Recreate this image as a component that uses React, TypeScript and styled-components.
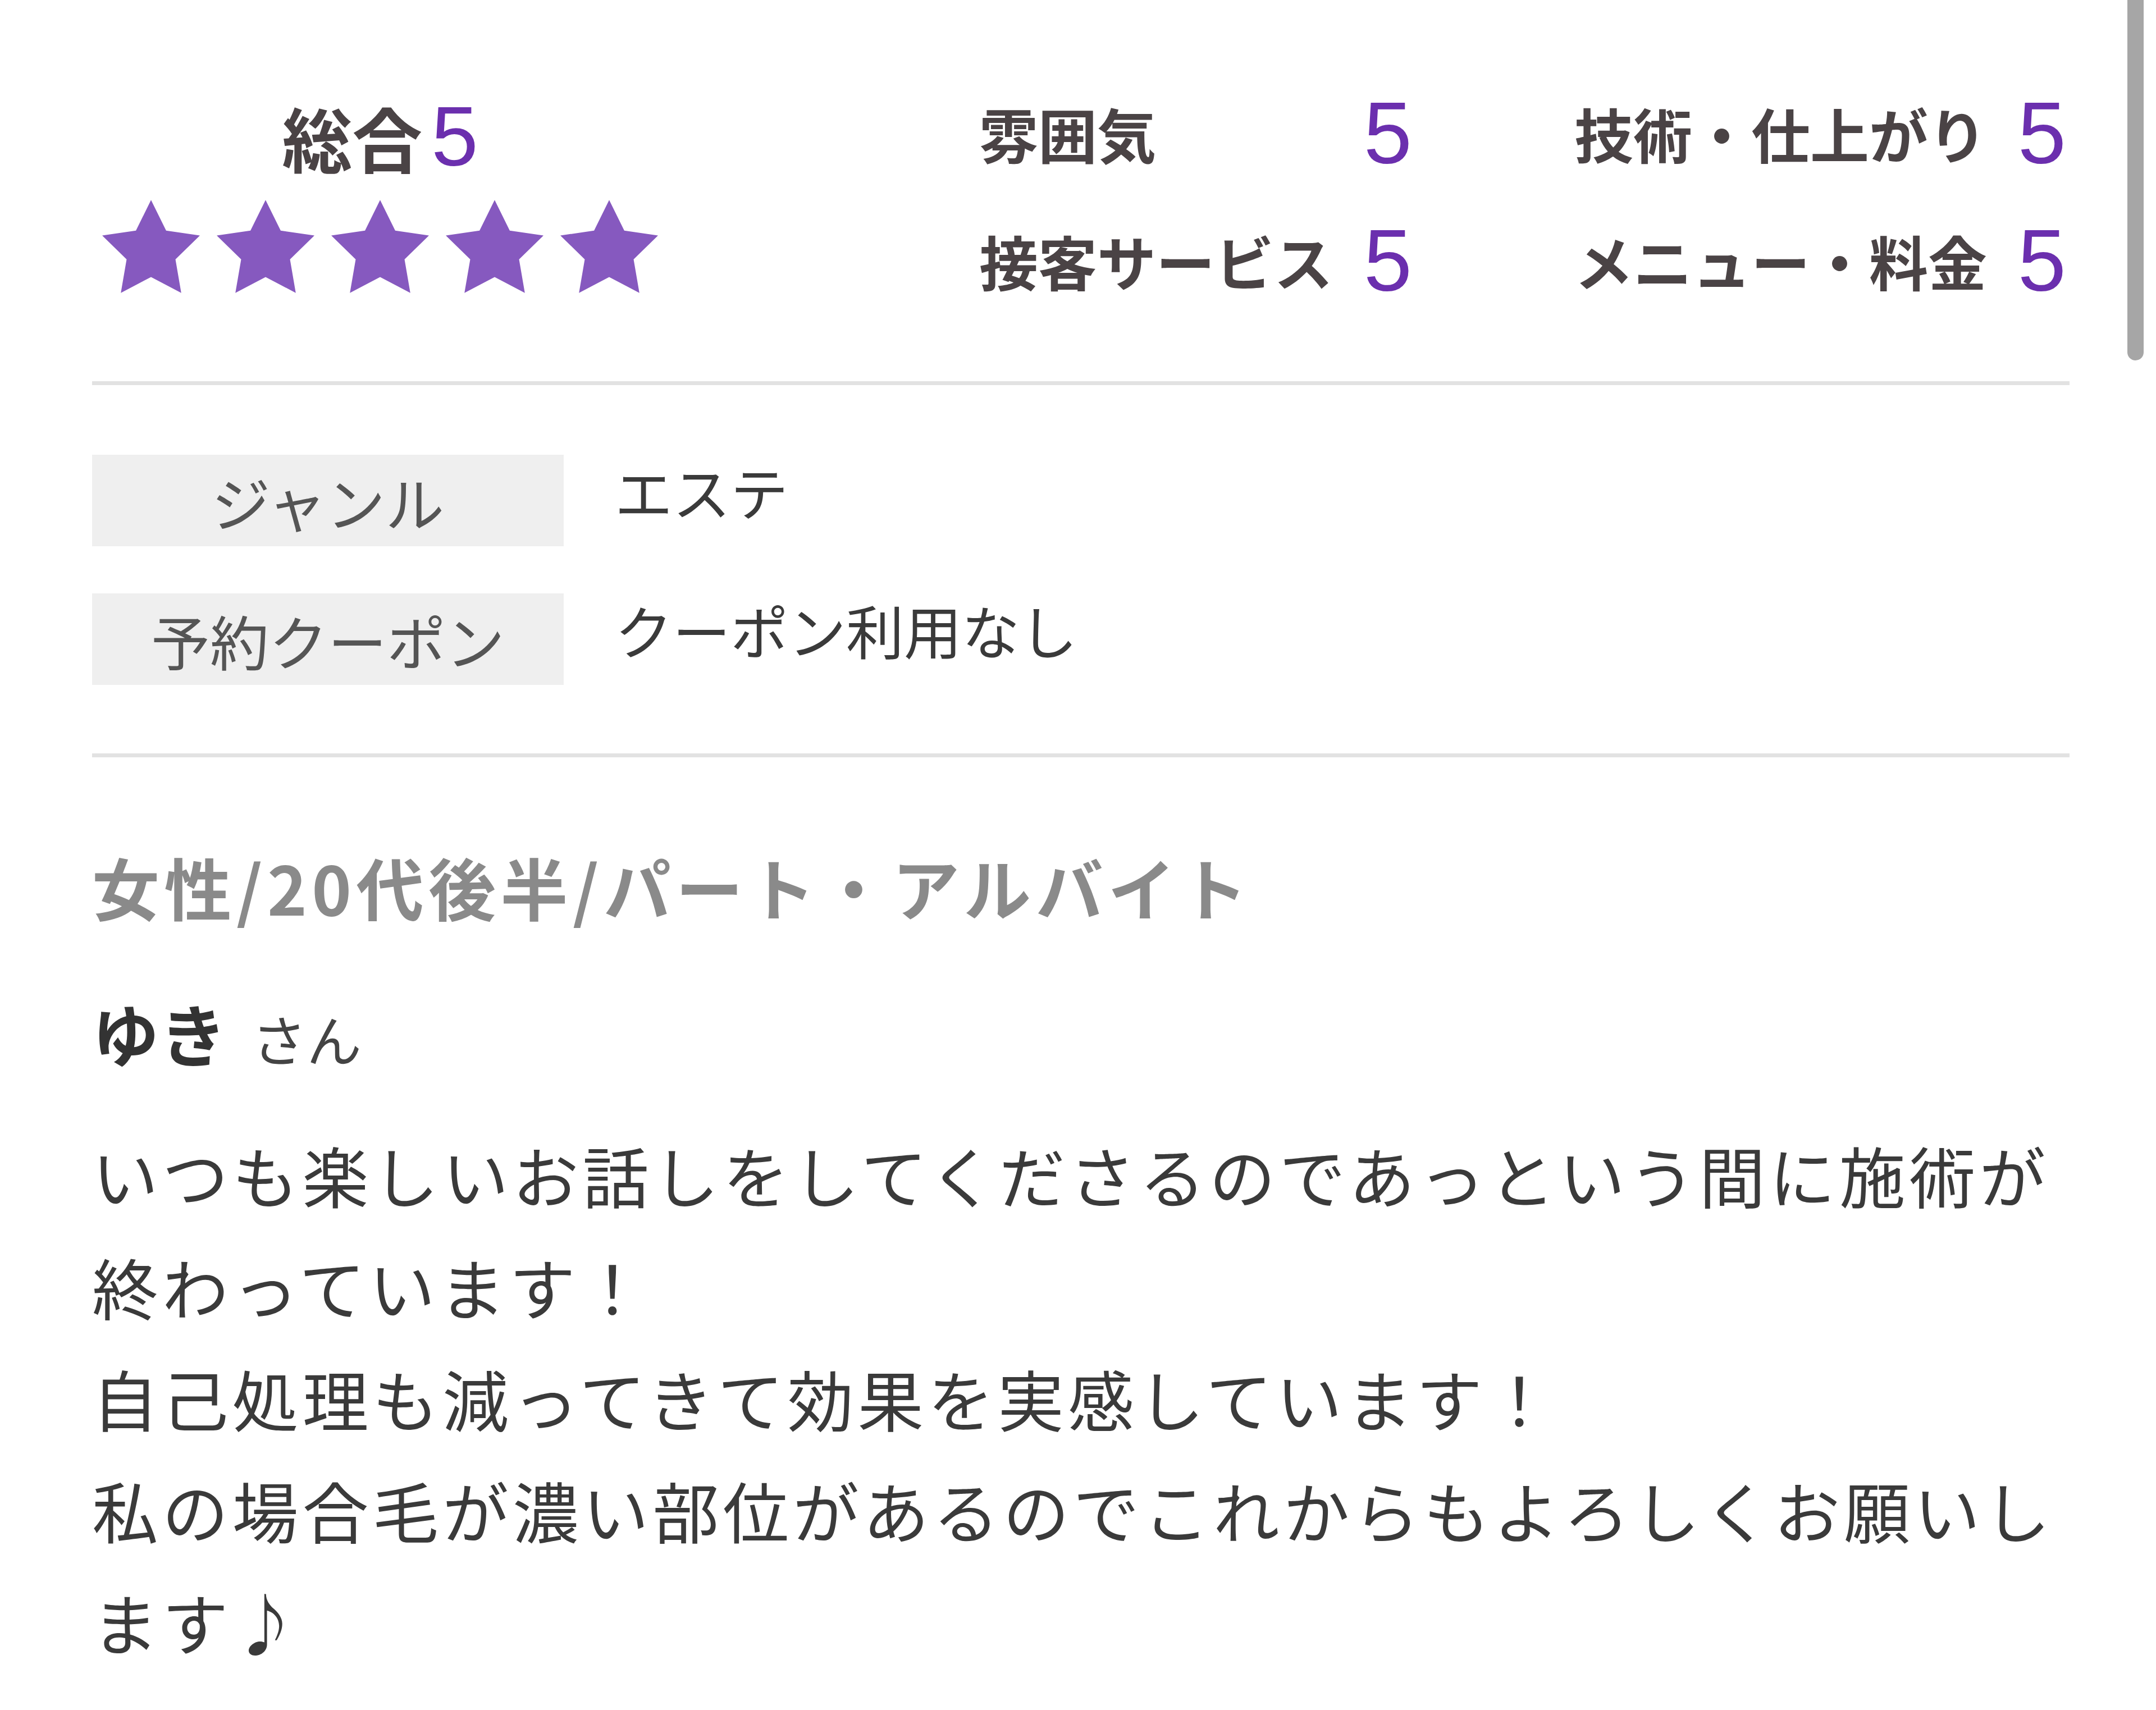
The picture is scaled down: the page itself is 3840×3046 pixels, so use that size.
import React from "react";
import styled, { createGlobalStyle } from "styled-components";

const GlobalStyle = createGlobalStyle`
  html, body {
    margin: 0;
    padding: 0;
    background: #ffffff;
  }
  body {
    font-family: "Noto Sans CJK JP", "Noto Sans", sans-serif;
  }
`;

const subRatings = [
  { label: "雰囲気", score: 5 },
  { label: "技術・仕上がり", score: 5 },
  { label: "接客サービス", score: 5 },
  { label: "メニュー・料金", score: 5 },
];

const info = [
  { label: "ジャンル", value: "エステ" },
  { label: "予約クーポン", value: "クーポン利用なし" },
];

const comment = [
  "いつも楽しいお話しをしてくださるのであっという間に施術が終わっています！",
  "自己処理も減ってきて効果を実感しています！",
  "私の場合毛が濃い部位があるのでこれからもよろしくお願いします♪",
];

const Star = () => (
  <svg width="174" height="166" viewBox="2 2 20 19.02">
    <path
      d="M12 2l3.09 6.26L22 9.27l-5 4.87 1.18 6.88L12 17.77l-6.18 3.25L7 14.14 2 9.27l6.91-1.01L12 2z"
      fill="#8659bf"
    />
  </svg>
);

export default function App() {
  return (
    <>
      <GlobalStyle />
      <Page>
        <ScrollThumb />
        <TopSection>
          <Overall>
            <OverallTitle>
              <OverallLabel>総合</OverallLabel>
              <Score $size={150}>5</Score>
            </OverallTitle>
            <Stars>
              {[0, 1, 2, 3, 4].map((i) => (
                <Star key={i} />
              ))}
            </Stars>
          </Overall>
          <SubGrid>
            {subRatings.map(({ label, score }) => (
              <SubItem key={label}>
                <SubLabel>{label}</SubLabel>
                <Score $size={155}>{score}</Score>
              </SubItem>
            ))}
          </SubGrid>
        </TopSection>
        <Divider />
        <InfoTable>
          {info.map(({ label, value }) => (
            <InfoRow key={label}>
              <InfoLabel>{label}</InfoLabel>
              <InfoValue>{value}</InfoValue>
            </InfoRow>
          ))}
        </InfoTable>
        <Divider $top={122} />
        <ReviewerMeta>女性/20代後半/パート・アルバイト</ReviewerMeta>
        <NameRow>
          <Name>ゆき</Name>
          <Honorific>さん</Honorific>
        </NameRow>
        <Comment>
          {comment.map((line, i) => (
            <React.Fragment key={i}>
              {line}
              {i < comment.length - 1 && <br />}
            </React.Fragment>
          ))}
        </Comment>
      </Page>
    </>
  );
}

const Page = styled.div`
  position: relative;
  width: 3840px;
  min-height: 3046px;
  box-sizing: border-box;
  padding: 0 154px 0 164px;
  overflow: hidden;
`;

const ScrollThumb = styled.div`
  position: absolute;
  top: -20px;
  right: 22px;
  width: 29px;
  height: 662px;
  border-radius: 15px;
  background: #a6a6a6;
`;

const TopSection = styled.section`
  display: flex;
  align-items: flex-start;
  padding-top: 168px;
  padding-bottom: 148px;
`;

const Overall = styled.div`
  width: 1026px;
  display: flex;
  flex-direction: column;
  align-items: center;
`;

const OverallTitle = styled.div`
  display: flex;
  align-items: center;
  gap: 16px;
  height: 150px;
`;

const OverallLabel = styled.span`
  font-size: 125px;
  font-weight: 700;
  line-height: 1;
  color: #4a4345;
`;

const Score = styled.span<{ $size: number }>`
  font-family: "Liberation Sans", Arial, sans-serif;
  font-size: ${({ $size }) => $size}px;
  line-height: 1;
  color: #6b2fae;
`;

const Stars = styled.div`
  display: flex;
  gap: 30px;
  margin-top: 38px;
`;

const SubGrid = styled.div`
  margin-left: 554px;
  display: grid;
  grid-template-columns: 771px 876px;
  column-gap: 289px;
  row-gap: 91px;
`;

const SubItem = styled.div`
  display: flex;
  align-items: center;
  justify-content: space-between;
  height: 136px;
`;

const SubLabel = styled.span`
  font-size: 105px;
  font-weight: 700;
  line-height: 1;
  color: #4a4345;
`;

const Divider = styled.hr<{ $top?: number }>`
  margin: ${({ $top = 0 }) => $top}px 0 0;
  border: none;
  height: 7px;
  background: #e2e2e2;
`;

const InfoTable = styled.div`
  display: flex;
  flex-direction: column;
  gap: 84px;
  margin-top: 124px;
`;

const InfoRow = styled.div`
  display: flex;
  align-items: flex-start;
  gap: 91px;
`;

const InfoLabel = styled.div`
  width: 840px;
  height: 163px;
  display: flex;
  align-items: center;
  justify-content: center;
  background: #efefef;
  font-size: 105px;
  color: #555555;
`;

const InfoValue = styled.div`
  font-size: 103px;
  line-height: 130px;
  color: #3a3a3a;
`;

const ReviewerMeta = styled.div`
  margin-top: 150px;
  font-size: 120px;
  font-weight: 700;
  line-height: 160px;
  letter-spacing: 8.5px;
  color: #8a8a8a;
`;

const NameRow = styled.div`
  display: flex;
  align-items: baseline;
  margin-top: 100px;
  line-height: 160px;
`;

const Name = styled.span`
  font-size: 120px;
  font-weight: 700;
  color: #333333;
`;

const Honorific = styled.span`
  margin-left: 44px;
  font-size: 98px;
  color: #444444;
`;

const Comment = styled.p`
  margin: 64px 0 0;
  font-size: 118px;
  line-height: 199px;
  letter-spacing: 6.8px;
  color: #3a3a3a;
`;
